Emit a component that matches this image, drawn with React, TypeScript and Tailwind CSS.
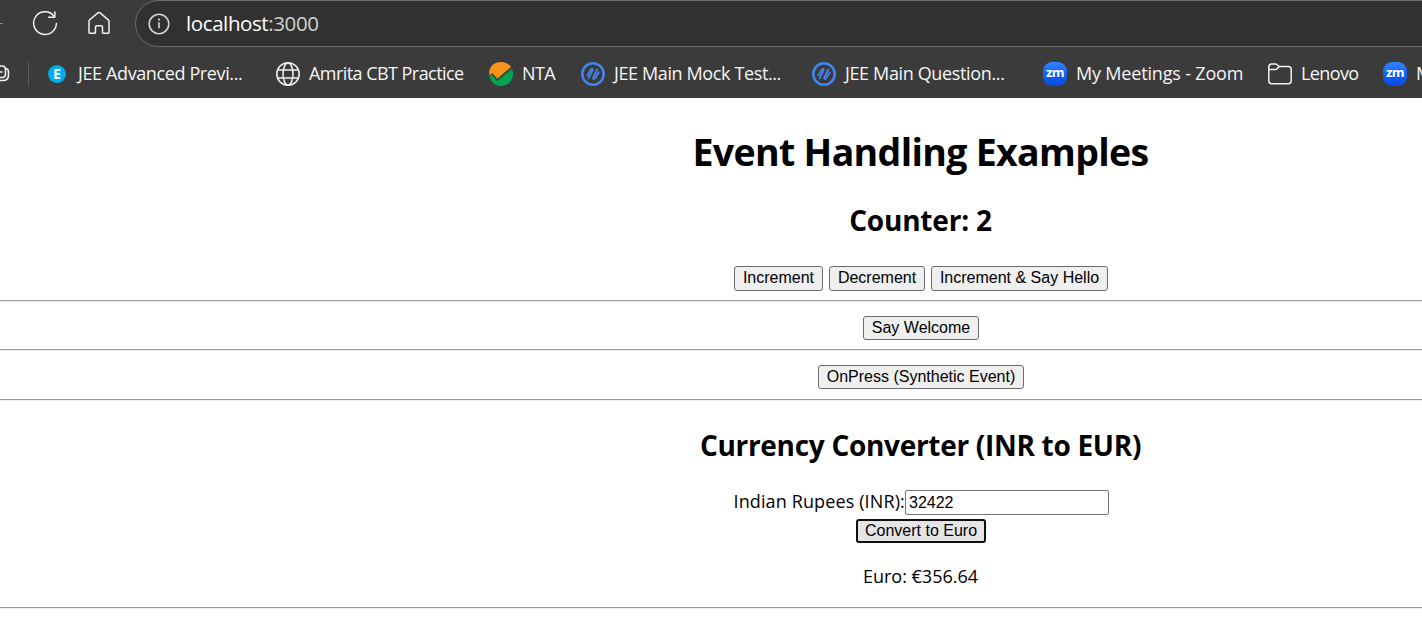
import React from "react";

const ui = "font-['Open_Sans','Noto_Sans',sans-serif]";
const btn =
  "block shrink-0 whitespace-nowrap rounded-[3px] border border-[#6b6b6b] bg-[#efefef] pb-[2px] text-center font-['Liberation_Sans',Arial,sans-serif] text-[16px] leading-[21px] text-black";

function Reload() {
  return (
    <svg width="26" height="26" viewBox="0 0 26 26" fill="none" stroke="#f2f2f2" strokeWidth="1.5" strokeLinecap="round" strokeLinejoin="round">
      <path d="M22.400 5.600A11.400 11.400 0 1 0 24.400 12.500" />
      <path d="M22.800 1v5.200h-6.300" />
    </svg>
  );
}

function Home() {
  return (
    <svg width="24" height="24" viewBox="0 0 24 24" fill="none" stroke="#f2f2f2" strokeWidth="1.5" strokeLinejoin="round">
      <path d="M2 10.2 Q2 9.4 2.7 8.8L11.2 1.7Q12 1.1 12.8 1.7L21.3 8.8Q22 9.4 22 10.2V21.2Q22 22.3 20.9 22.3H16.6Q15.5 22.3 15.5 21.2V16Q15.5 14.7 14.2 14.7H9.8Q8.5 14.7 8.5 16V21.2Q8.5 22.3 7.4 22.3H3.1Q2 22.3 2 21.2Z" />
    </svg>
  );
}

function Info() {
  return (
    <svg width="22" height="22" viewBox="0 0 22 22" fill="none" stroke="#d4d4d4" strokeWidth="1.6">
      <circle cx="11" cy="11" r="9.800" />
      <path d="M11 9.300v6" />
      <circle cx="11" cy="6.600" r="1.100" fill="#d4d4d4" stroke="none" />
    </svg>
  );
}

function Globe() {
  return (
    <svg width="24" height="24" viewBox="0 0 24 24" fill="none" stroke="#f2f2f2" strokeWidth="1.5">
      <circle cx="12" cy="12" r="11.200" />
      <ellipse cx="12" cy="12" rx="5" ry="11.200" />
      <path d="M1.800 8h20.400M1.800 16h20.400" />
    </svg>
  );
}

function Check() {
  return (
    <svg width="24" height="24" viewBox="0 0 24 24">
      <path d="M0.200 13C-0.500 5 5 0 12 0c4.500 0 8 2 10 5L8.500 17 3.500 11.500z" fill="#f7931e" />
      <path d="M0.500 14L3 12.500l5 6.500L23 7A12 12 0 0 1 12 24C6 24 1.500 20 0.500 14z" fill="#00a651" />
      <path d="M3 11.800L8.200 17.700 22.300 5.700" fill="none" stroke="#4a4a2c" strokeWidth="1.500" />
    </svg>
  );
}

function Slashes() {
  return (
    <svg width="24" height="24" viewBox="0 0 24 24" fill="none" stroke="#4285f4" strokeLinecap="round" strokeLinejoin="round">
      <circle cx="12" cy="12" r="10.700" strokeWidth="2.500" />
      <path d="M6.300 13.500L9.800 7.600Q11.300 6 11.800 7.800L7.500 16.300M16.300 7.500L12 16.200Q12.700 18 14.200 16.300L17.800 10.300" strokeWidth="1.700" />
    </svg>
  );
}

function Zoom() {
  return (
    <span className="flex size-6 items-center justify-center rounded-[9px] bg-linear-to-b from-[#3485ff] via-[#1260f5] to-[#0b4be0] pb-[2px] font-['Open_Sans',sans-serif] text-[13px] leading-none font-bold tracking-[-0.5px] text-white">
      zm
    </span>
  );
}

function Folder() {
  return (
    <svg width="24" height="22" viewBox="0 0 24 22" fill="none" stroke="#f2f2f2" strokeWidth="1.5" strokeLinejoin="round">
      <path d="M0.800 4Q0.800 1 3.800 1H7.500Q8.500 1 9.200 1.700L11.200 3.500H20.200Q23.200 3.500 23.200 6.500V17.800Q23.200 20.800 20.200 20.800H3.800Q0.800 20.800 0.800 17.800Z" />
      <path d="M0.800 6.500H7.500Q8.500 6.500 9.200 5.800L11.200 3.500" />
    </svg>
  );
}

function Bookmark({ icon, label, width, gap, track }: { icon: React.ReactNode; label: string; width: string; gap: string; track: string }) {
  return (
    <div className={`flex h-full shrink-0 items-center ${width} ${gap}`}>
      <span className="flex shrink-0">{icon}</span>
      <span className={`whitespace-nowrap pb-px text-[18px] leading-6 ${track}`}>{label}</span>
    </div>
  );
}

function Rule() {
  return <hr className="h-[2px] border-0 border-t border-[#9a9a9a] bg-[#eeeeee]" />;
}

export default function App() {
  return (
    <div className={`h-[637px] w-[1422px] overflow-hidden bg-white text-black ${ui}`}>
      <header className="h-[98px] overflow-hidden bg-[#3b3b3b] text-[#f5f5f5]">
        <div className="flex h-[47px] items-center">
          <span className="h-px w-[3px] shrink-0 bg-[#8a8a8a]" />
          <div className="ml-[29px] shrink-0"><Reload /></div>
          <div className="ml-[29px] shrink-0 pb-[2px]"><Home /></div>
          <div className="ml-[24px] flex h-[47px] w-[1320px] shrink-0 items-center rounded-l-full border border-[#6e6e6e] bg-[#313131] pl-[12px]">
            <Info />
            <span className="ml-[16px] pb-[2px] text-[20.5px] leading-6 tracking-[-0.4px] text-white">localhost<span className="text-[#d0d0d0]">:3000</span></span>
          </div>
        </div>
        <div className="flex h-[53px] items-center">
          <div className="w-[28px] shrink-0">
            <svg width="10" height="18" viewBox="0 0 10 18" fill="none" stroke="#f2f2f2" strokeWidth="1.6">
              <path d="M0 1H2Q5.500 1 5.500 4.500V9Q5.500 12.500 2 12.500H0M6 3.500Q8.500 4 8.500 7V10Q8.500 15.500 3 15.500H0M0 7H2.500" />
            </svg>
          </div>
          <div className="h-6 w-px shrink-0 bg-[#5b5b5b]" />
          <div className="w-[19px] shrink-0" />
          <Bookmark width="w-[228px]" gap="gap-[12px]" track="tracking-[-0.38px]" label="JEE Advanced Previ..." icon={<span className="flex size-[18px] items-center justify-center rounded-full bg-[#00adef] text-[14px] leading-none font-bold text-white">E</span>} />
          <Bookmark width="w-[213px]" gap="gap-[9px]" track="tracking-[-0.55px]" label="Amrita CBT Practice" icon={<Globe />} />
          <Bookmark width="w-[92px]" gap="gap-[9px]" track="tracking-[-0.6px]" label="NTA" icon={<Check />} />
          <Bookmark width="w-[231px]" gap="gap-[9px]" track="tracking-[-0.38px]" label="JEE Main Mock Test..." icon={<Slashes />} />
          <Bookmark width="w-[231px]" gap="gap-[9px]" track="tracking-[-0.36px]" label="JEE Main Question..." icon={<Slashes />} />
          <Bookmark width="w-[225px]" gap="gap-[9px]" track="tracking-[-0.18px]" label="My Meetings - Zoom" icon={<Zoom />} />
          <Bookmark width="w-[115px]" gap="gap-[9px]" track="tracking-[-0.6px]" label="Lenovo" icon={<Folder />} />
          <Bookmark width="w-[231px]" gap="gap-[9px]" track="tracking-[-0.18px]" label="My Meetings - Zoom" icon={<Zoom />} />
        </div>
      </header>
      <main className="w-[1841px] pt-[27px] text-center">
        <h1 className="h-[54px] text-[37.5px] leading-[54px] font-bold tracking-[-0.67px]">Event Handling Examples</h1>
        <h2 className="mt-[21px] h-10 text-[28px] leading-10 font-bold tracking-[-0.2px]">Counter: 2</h2>
        <div className="mt-[26px] flex h-[25px] justify-center gap-[6px] pl-px">
          <button className={`${btn} h-[25px] w-[89px]`}>Increment</button>
          <button className={`${btn} h-[25px] w-[96px]`}>Decrement</button>
          <button className={`${btn} h-[25px] w-[177px]`}>Increment &amp; Say Hello</button>
        </div>
        <div className="pt-[9px]"><Rule /></div>
        <div className="flex h-[47px] justify-center pt-[14px] pl-px">
          <button className={`${btn} h-[24px] w-[116px]`}>Say Welcome</button>
        </div>
        <Rule />
        <div className="flex h-[48px] justify-center pt-[14px] pl-px">
          <button className={`${btn} h-[24px] w-[206px]`}>OnPress (Synthetic Event)</button>
        </div>
        <Rule />
        <h2 className="mt-[24px] h-10 text-[28px] leading-10 font-bold tracking-[-0.3px]">Currency Converter (INR to EUR)</h2>
        <div className="mt-[25px] flex h-[25px] items-center justify-center pl-px">
          <label htmlFor="inr" className="w-[171px] whitespace-nowrap pb-[3px] text-left text-[18px] leading-6 tracking-[0.12px]">Indian Rupees (INR):</label>
          <input id="inr" defaultValue="32422" className="h-[25px] w-[204px] rounded-[2px] border border-[#767676] px-[3.5px] font-['Liberation_Sans',Arial,sans-serif] text-[16px]" />
        </div>
        <div className="mt-[4px] flex justify-center pl-px">
          <button className="h-6 w-[130px] rounded-[3px] border-2 border-[#101010] bg-[#e5e5e5] font-['Liberation_Sans',Arial,sans-serif] text-[16px] leading-5">Convert to Euro</button>
        </div>
        <p className="mt-[21px] mb-[19px] h-6 text-[18px] leading-6">Euro: €356.64</p>
        <Rule />
      </main>
    </div>
  );
}
